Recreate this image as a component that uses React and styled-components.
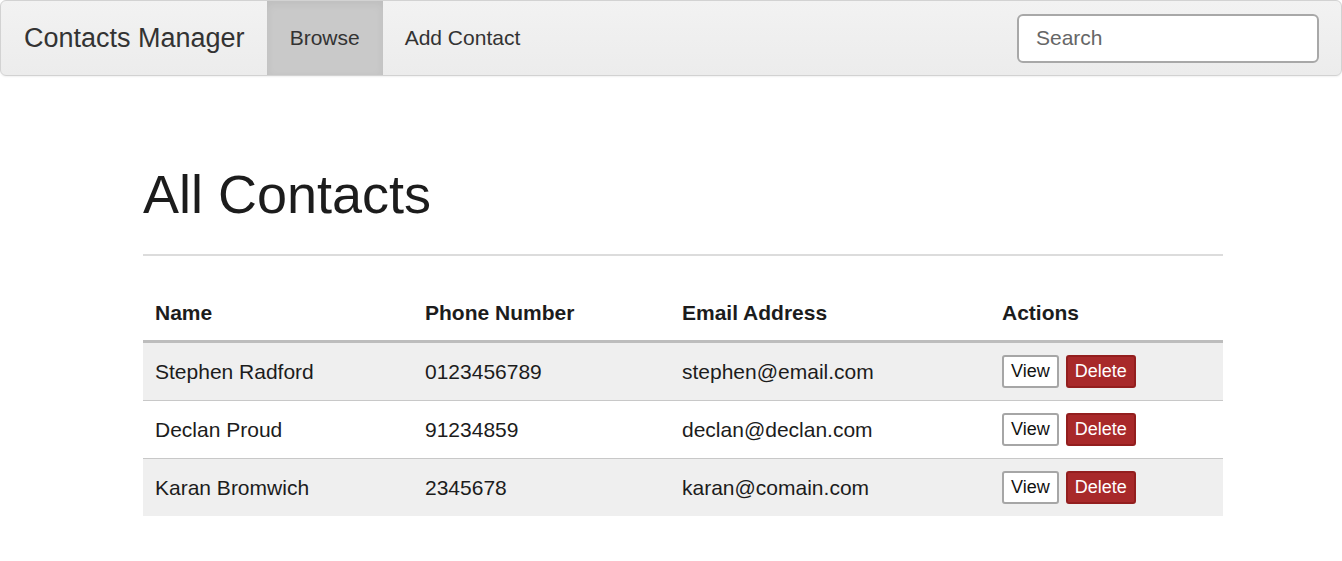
import styled, { createGlobalStyle } from 'styled-components'

const GlobalStyle = createGlobalStyle`
    html, body {
        margin: 0;
        padding: 0;
        background: #fff;
        overflow: hidden;
    }
    body {
        font-family: "Liberation Sans", Arial, sans-serif;
        font-size: 21px;
        line-height: 30px;
        color: #1c1c1c;
    }
    * {
        box-sizing: border-box;
    }
`

const contacts = [
    { id: 1, name: 'Stephen Radford', phone: '0123456789', email: 'stephen@email.com' },
    { id: 2, name: 'Declan Proud', phone: '91234859', email: 'declan@declan.com' },
    { id: 3, name: 'Karan Bromwich', phone: '2345678', email: 'karan@comain.com' },
]

const StyledNavbar = styled('nav')`
    display: flex;
    align-items: stretch;
    height: 76px;
    border: 1px solid #d2d2d2;
    border-radius: 6px;
    background: linear-gradient(to bottom, #f2f2f2, #ececec);
    box-shadow: 0 1px 2px rgba(0, 0, 0, 0.06);
`
const StyledBrand = styled('a')`
    padding: 0 22px 0 23px;
    font-size: 27px;
    line-height: 74px;
    color: #333;
    text-decoration: none;
`
const StyledNavLink = styled('a')`
    padding: 0 23px 0 ${({ $active }) => ($active ? '23px' : '22px')};
    font-size: 21px;
    line-height: 74px;
    color: #333;
    text-decoration: none;
    background: ${({ $active }) => ($active ? '#c9c9c9' : 'transparent')};
    box-shadow: ${({ $active }) =>
        $active ? 'inset 0 3px 9px rgba(0, 0, 0, 0.06)' : 'none'};
`
const StyledSearch = styled('input')`
    align-self: center;
    margin-left: auto;
    margin-right: 22px;
    width: 302px;
    height: 49px;
    padding: 0 17px;
    border: 2px solid #a8a8a8;
    border-radius: 6px;
    background: #fff;
    font-family: inherit;
    font-size: 21px;
    color: #333;
    &::placeholder {
        color: #666;
    }
`

const StyledMain = styled('main')`
    width: 1080px;
    margin-left: 143px;
`
const StyledPageHeader = styled('div')`
    margin-top: 89px;
    padding-bottom: 30px;
    border-bottom: 2px solid #dcdcdc;
    h1 {
        margin: 0;
        font-size: 54px;
        font-weight: 400;
        line-height: 59px;
        color: #1c1c1c;
    }
`
const StyledTable = styled('table')`
    width: 100%;
    margin-top: 30px;
    border-collapse: collapse;
    th {
        padding: 12px;
        text-align: left;
        font-weight: 700;
        line-height: 30px;
        border-bottom: 3px solid #bdbdbd;
    }
    td {
        padding: 12px;
        line-height: 30px;
        vertical-align: middle;
        border-top: 1px solid #c8c8c8;
    }
    tbody tr:first-child td {
        border-top: none;
    }
`
const StyledRow = styled('tr')`
    background: ${({ $striped }) => ($striped ? '#efefef' : '#fff')};
`
const StyledActions = styled('div')`
    display: flex;
    gap: 7px;
`
const StyledButton = styled('button')`
    height: 33px;
    padding: 0 7px;
    border: 2px solid ${({ $danger }) => ($danger ? '#931e1e' : '#a6a6a6')};
    border-radius: 3px;
    background: ${({ $danger }) => ($danger ? '#a8292a' : '#fff')};
    color: ${({ $danger }) => ($danger ? '#fff' : '#111')};
    font-family: inherit;
    font-size: 18px;
    line-height: 27px;
`
const StyledFooter = styled('footer')`
    padding: 42px 0 0 887px;
    font-size: 18px;
    line-height: 24px;
    color: #b0b0b0;
`

function App() {
    return (
        <>
            <GlobalStyle />
            <StyledNavbar>
                <StyledBrand href="#">Contacts Manager</StyledBrand>
                <StyledNavLink href="#" $active>
                    Browse
                </StyledNavLink>
                <StyledNavLink href="#">Add Contact</StyledNavLink>
                <StyledSearch type="text" placeholder="Search" />
            </StyledNavbar>
            <StyledMain>
                <StyledPageHeader>
                    <h1>All Contacts</h1>
                </StyledPageHeader>
                <StyledTable>
                    <colgroup>
                        <col style={{ width: 270 }} />
                        <col style={{ width: 257 }} />
                        <col style={{ width: 320 }} />
                        <col style={{ width: 233 }} />
                    </colgroup>
                    <thead>
                        <tr>
                            <th>Name</th>
                            <th>Phone Number</th>
                            <th>Email Address</th>
                            <th>Actions</th>
                        </tr>
                    </thead>
                    <tbody>
                        {contacts.map((contact, i) => (
                            <StyledRow key={contact.id} $striped={i % 2 === 0}>
                                <td>{contact.name}</td>
                                <td>{contact.phone}</td>
                                <td>{contact.email}</td>
                                <td>
                                    <StyledActions>
                                        <StyledButton>View</StyledButton>
                                        <StyledButton $danger>Delete</StyledButton>
                                    </StyledActions>
                                </td>
                            </StyledRow>
                        ))}
                    </tbody>
                </StyledTable>
                <StyledFooter>Author: Karan Bromwich</StyledFooter>
            </StyledMain>
        </>
    )
}

export default App
